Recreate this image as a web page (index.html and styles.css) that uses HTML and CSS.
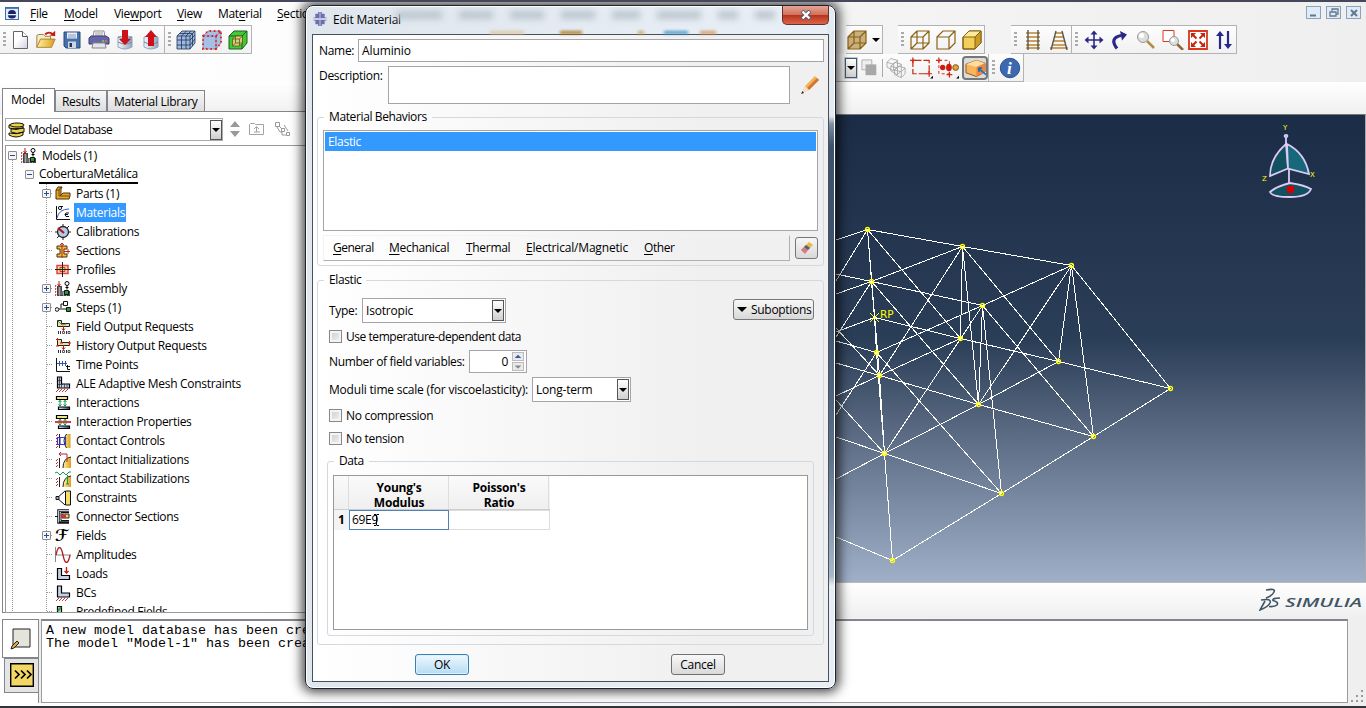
FILE: index.html
```html
<!DOCTYPE html>
<html lang="en">
<head>
<meta charset="utf-8">
<title>Edit Material</title>
<link rel="stylesheet" href="styles.css">
</head>
<body>
<svg class="defs" aria-hidden="true">
  <defs>
    <linearGradient id="gold" x1="0" x2="1"><stop offset="0" stop-color="#fff0a0"/><stop offset="1" stop-color="#d9a020"/></linearGradient>
    <linearGradient id="steel" x1="0" x2="1"><stop offset="0" stop-color="#f4f7fb"/><stop offset="1" stop-color="#92a4c0"/></linearGradient>
    <linearGradient id="paper" x1="0" x2="1" y2="1"><stop offset=".4" stop-color="#fff"/><stop offset="1" stop-color="#cfcfe0"/></linearGradient>
    <linearGradient id="metal" x1="0" x2="1"><stop offset="0" stop-color="#dfe6f5"/><stop offset="1" stop-color="#26388a"/></linearGradient>
    <symbol id="assembly" viewBox="0 0 16 16">
      <path d="M4 0v5M2.500 3L4 5l1.500-2" stroke="#c01818" fill="none"/>
      <path d="M1 4l-1 2M1 7l-1 2M1 10l-1 2M1 13l-1 2" stroke="#c01818"/>
      <path d="M2 5h5v5h8v5H2z" fill="#444"/><path d="M3 7h3M3 9h3M3 11h6M3 13h11M4.500 6v9M8.500 11v4M11.500 12v3" stroke="#ccc" stroke-width=".6"/>
      <circle cx="12" cy="2.500" r="2" fill="#fff" stroke="#000"/><path d="M12 4.500v4M10.500 6.500h3" stroke="#000"/><path d="M9.500 9.500h4v4h-4z" fill="#2c9a34" stroke="#111"/>
    </symbol>
    <symbol id="wirecube" viewBox="0 0 20 20"><path d="M1 7h12v12H1zM7 1h12v12H7zM1 7l6-6M13 7l6-6M13 19l6-6M1 19l6-6" fill="none" stroke="#8a6110" stroke-width="1.200"/></symbol>
    <symbol id="load" viewBox="0 0 16 16"><path d="M2.500 2.500h4v7h8v4h-12z" fill="#c4cfe8" stroke="#000" stroke-width="1.200"/></symbol>
    <symbol id="bc" viewBox="0 0 16 16"><path d="M2.500 1h4v7h8v4h-12z" fill="#c4cfe8" stroke="#000" stroke-width="1.200"/><path d="M1 16l3-3M4 16l3-3M7 16l3-3M10 16l3-3" stroke="#c02020" stroke-width=".9"/></symbol>
    <symbol id="inter" viewBox="0 0 16 16"><path d="M1.500 1.500h11v3h-11z" fill="#f2e48c" stroke="#000" stroke-width="1.200"/><path d="M5 5v6M10 5v6M3.500 7L5 5.500 6.500 7M3.500 9.500L5 11l1.500-1.500M8.500 7L10 5.500 11.500 7M8.500 9.500L10 11l1.500-1.500" stroke="#0a9a48" fill="none"/><path d="M3.500 12h11v2.500h-11z" fill="url(#metal)" stroke="#000" stroke-width="1.200"/></symbol>
    <symbol id="output" viewBox="0 0 16 16"><path d="M2.500 1.500h4v3h8v3h-12z" fill="#e9dca4" stroke="#222"/><path d="M8.500 7v4.500M7 9.500l1.500 2 1.500-2" stroke="#c01818" fill="none"/><path d="M3.500 12v3M5.500 12v3M11.500 12v3" stroke="#333"/><path d="M7.500 12.500h2v2h-2zM13 12.500h2v2h-2z" fill="none" stroke="#333" stroke-width=".8"/></symbol>
    <symbol id="contact" viewBox="0 0 16 16"><path d="M1 3l2-2M1 6l2-2M1 9l2-2M1 12l2-2M1 15l2-2" stroke="#c02020"/><path d="M4.500 1v14" stroke="#222"/><path d="M15.500 1h-4q-5 6.500 0 14h4z" fill="url(#gold)"/><path d="M11.500 1q-5 6.500 0 14" fill="none" stroke="#222"/></symbol>
  </defs>
</svg>
<div class="app">
  <div class="menubar">
    <svg class="ico14" viewBox="0 0 14 14"><rect x=".5" y=".5" width="13" height="12" fill="#dfeefa" stroke="#3c6fa8"/><path d="M1 1h12v1H1z" fill="#4c82bd"/><path d="M3 7a4 4 0 0 1 8 0zM3 8.300a4 3.200 0 0 0 8 0z" fill="#20206a"/></svg>
    <span class="m1"><u>F</u>ile</span><span class="m2"><u>M</u>odel</span><span class="m3">Vie<u>w</u>port</span><span class="m4"><u>V</u>iew</span><span class="m5">Mat<u>e</u>rial</span><span><u>S</u>ection</span>
    <div class="winbtns">
      <b><svg viewBox="0 0 13 11"><path d="M3 8.500h6" stroke="#667788" stroke-width="2"/></svg></b>
      <b><svg viewBox="0 0 13 11"><path d="M5 4V2h6v5H9M3 5h6v4H3z" fill="none" stroke="#667788" stroke-width="1.300"/></svg></b>
      <b><svg viewBox="0 0 13 11"><path d="M4 3l6 6M10 3L4 9" stroke="#667788" stroke-width="2"/></svg></b>
    </div>
  </div>
  <div class="toolrow">
    <div class="tools first">
      <i class="grip"></i>
      <svg viewBox="0 0 20 20"><path d="M2.500 1.500h9l5 5v12h-14z" fill="url(#paper)" stroke="#666"/><path d="M11.500 1.500v5h5" fill="#fff" stroke="#555"/></svg>
      <svg class="wide" viewBox="0 0 24 20"><path d="M2 18V5l2-1h5l2 2h6v4" fill="#f4ead0" stroke="#9b7a2c"/><path d="M2 18l4-9h16l-4 9z" fill="url(#gold)" stroke="#a97f22"/><path d="M11 4q4-4 9 0" fill="none" stroke="#c81e10" stroke-width="2"/><path d="M22 0v6l-6-1z" fill="#c81e10"/></svg>
      <svg viewBox="0 0 20 20"><path d="M2 2h16v16H4l-2-2z" fill="#4470ab" stroke="#2c4a77"/><path d="M5 2.500h10v6H5z" fill="#e8eef6"/><path d="M6 5h8M6 7h8" stroke="#8c9cb4"/><path d="M6 11.500h8V18H6z" fill="#cdd5df"/><path d="M7.500 13h2.500v4H7.500z" fill="#1c3560"/></svg>
      <svg class="wide" viewBox="0 0 22 20"><path d="M6 1h10l1 6H5z" fill="#fff" stroke="#888"/><path d="M7 3h8M7 5h8" stroke="#999"/><path d="M1 8l2-2h15l3 2v6H1z" fill="#6466a8" stroke="#3b3d78"/><path d="M5 13h12l1 5H4z" fill="#e4e4ea" stroke="#888"/><path d="M14 10h2v2h-2z" fill="#4dd06a"/><path d="M17 10h2v2h-2z" fill="#e07040"/></svg>
      <svg viewBox="0 0 20 20"><path d="M3 7v10q7 4 14 0V7q-7-3-14 0z" fill="url(#steel)" stroke="#8fa3bc"/><path d="M3 12q7 4 14 0M3 7q7 4 14 0" fill="none" stroke="#6e85a2"/><path d="M7 0h6v9h3l-6 6-6-6h3z" fill="#cc1018"/></svg>
      <svg viewBox="0 0 20 20"><path d="M3 7v10q7 4 14 0V7q-7-3-14 0z" fill="url(#steel)" stroke="#8fa3bc"/><path d="M3 12q7 4 14 0" fill="none" stroke="#6e85a2"/><path d="M7 16V7H4l6-7 6 7h-3v9z" fill="#cc1018"/></svg>
    </div>
    <div class="tools second">
      <i class="grip"></i>
      <svg viewBox="0 0 20 20"><path d="M1 6l5-5h13v12l-5 6H1z" fill="#9db9e2"/><path d="M1 6h13v13H1zM1 6l5-5h13v12l-5 6M14 6l5-5M5.500 6v13M10 6v13M1 10h13l5-5M1 15h13l5-6M3.500 3.500h13V16M10 6l5-5M5.500 6l5-5" fill="none" stroke="#223452" stroke-width=".8"/></svg>
      <svg viewBox="0 0 20 20"><path d="M1 6l5-5h13v12l-5 6H1z" fill="#a6bfe6"/><path d="M1 6h13v13H1zM1 6l5-5h13v12l-5 6M14 6l5-5" fill="none" stroke="#7788a8" stroke-width=".8"/><path d="M1 6h13v13H1zM1 6l5-5h13v12l-5 6M14 6l5-5" fill="none" stroke="#f01818" stroke-width="1.800" stroke-dasharray="1.500 2.800"/></svg>
      <svg viewBox="0 0 20 20"><path d="M1 6l5-5h13v12l-5 6H1z" fill="#3fcb33" stroke="#225c1e"/><path d="M1 6h13v13M14 6l5-5" fill="none" stroke="#225c1e"/><path d="M4.500 9l3-3h7v7l-3 3h-7z" fill="#d9cd72" stroke="#5a5526" stroke-width=".8"/><path d="M4.500 9h7v7M11.500 9l3-3M7.500 6v7h7M7.500 13l-3 3" stroke="#5a5526" fill="none" stroke-width=".8"/></svg>
    </div>
    <div class="spacer"></div>
    <div class="tools display">
      <svg viewBox="0 0 20 20"><path d="M1 7l6-6h12v12l-6 6H1z" fill="#c8b080"/><use href="#wirecube"/></svg><i class="down"></i>
    </div>
    <div class="tools cubes">
      <i class="grip"></i>
      <svg viewBox="0 0 20 20"><use href="#wirecube"/></svg>
      <svg viewBox="0 0 20 20"><path d="M1 7h12v12H1zM1 7l6-6h12v12l-6 6M13 7l6-6" fill="none" stroke="#8a6110" stroke-width="1.200"/></svg>
      <svg viewBox="0 0 20 20"><path d="M1 7l6-6h12v12l-6 6H1z" fill="#f3cf59" stroke="#7b5810"/><path d="M13 7l6-6v12l-6 6z" fill="#c99b28"/><path d="M1 7l6-6h12l-6 6z" fill="#fbe99c"/><path d="M1 7h12v12M13 7l6-6M1 7l6-6h12v12l-6 6H1z" fill="none" stroke="#8a6110"/></svg>
    </div>
    <div class="tools nav1">
      <i class="grip"></i>
      <svg viewBox="0 0 20 20"><path d="M3 3h14M3 7h14M3 11h14M3 15h14M3 18h14" stroke="#b98531" stroke-width="1.600"/><path d="M5 0v20M15 0v20" stroke="#555" stroke-width="1.400"/></svg>
      <svg viewBox="0 0 20 20"><path d="M6 3h8M5 7h10M4 11h12M3 15h14M1 18h18" stroke="#b98531" stroke-width="1.600"/><path d="M7 1L2 20M13 1l5 19" stroke="#555" stroke-width="1.400"/></svg>
    </div>
    <div class="tools nav2">
      <i class="grip"></i>
      <svg viewBox="0 0 20 20"><path d="M10 2v16M2 10h16" stroke="#2a2887" stroke-width="1.600"/><path d="M10 .5l3.500 4h-7zM10 19.500l3.500-4h-7zM.5 10l4-3.500v7zM19.500 10l-4-3.500v7z" fill="#2a2887"/></svg>
      <svg viewBox="0 0 20 20"><path d="M7 18.500Q-1 8 11 5.500" stroke="#2a2887" stroke-width="3.200" fill="none"/><path d="M10 1l7 3.500-5 6z" fill="#2a2887"/></svg>
      <svg viewBox="0 0 20 20"><path d="M11 11l7 7" stroke="#b28b45" stroke-width="2.500"/><circle cx="7" cy="7" r="5.500" fill="#dcdedc" stroke="#999"/><circle cx="5.500" cy="5.500" r="2.500" fill="#fff"/></svg>
      <svg class="wide" viewBox="0 0 22 20"><path d="M1 .5h11v11H1z" fill="#fff" stroke="#d83a20"/><path d="M15 14l6 6" stroke="#8c6a34" stroke-width="2.500"/><circle cx="12" cy="11" r="4.500" fill="#dcdedc" stroke="#999"/><circle cx="11" cy="10" r="2" fill="#fff"/></svg>
      <svg class="fit" viewBox="0 0 20 20"><path d="M1 1h18v18H1z" fill="#fff" stroke="#d63820" stroke-width="1.800"/><path d="M3 3h5L3 8zM17 3h-5l5 5zM3 17h5l-5-5zM17 17h-5l5-5z" fill="#c62410"/><path d="M4 4l4.500 4.500M16 4l-4.500 4.500M4 16l4.500-4.500M16 16l-4.500-4.500" stroke="#c62410" stroke-width="2"/></svg>
      <svg viewBox="0 0 20 20"><path d="M6 4v15M14 1v15" stroke="#2a2887" stroke-width="2.200"/><path d="M6 1l4 5H2zM14 19l4-5h-8z" fill="#2a2887"/></svg>
    </div>
  </div>
  <div class="toolrow two">
    <div class="tools blue"><i class="combo"></i>
      <svg viewBox="0 0 20 20"><path d="M1 1h11v11H1z" fill="#eee" stroke="#aaa"/><path d="M5 6h12v12H5z" fill="#a8a8a8"/></svg><i class="sep"></i>
      <svg class="wide" viewBox="0 0 22 22"><path d="M1 5l4-4 7 2v7l-4 4-7-4zM5 9l4-4 7 2v7l-4 4-7-4zM9 13l4-4 7 2v6l-4 4-7-3zM1 5l7 2 4-4M8 7v7M5 9l7 2 4-4M12 11v7M9 13l7 2 4-4M16 15v6" fill="#f6f6f6" stroke="#9b9b9b" stroke-width=".8"/></svg>
      <svg class="box" viewBox="0 0 24 22"><path d="M3 3h17v14H3z" fill="none" stroke="#c03018" stroke-width="1.300" stroke-dasharray="9 2"/><path d="M0 3h6M3 0v6M17 17h6M20 14v6" stroke="#d02818" stroke-width="1.300"/><path d="M24 19v3h-3z" fill="#000"/></svg>
      <svg class="box" viewBox="0 0 24 22"><path d="M0 3h6M3 0v6M11 18h6M14 15v6" stroke="#d02818" stroke-width="1.300"/><path d="M3 3h11v14H3z" fill="none" stroke="#d02818" stroke-dasharray="3 3"/><circle cx="7" cy="10.500" r="2.800" fill="#cc1c0c"/><ellipse cx="13.500" cy="10.500" rx="3" ry="4" fill="#cc1c0c"/><circle cx="20.500" cy="10.500" r="3" fill="#dfa43a" stroke="#7c4f16"/><path d="M24 19v3h-3z" fill="#000"/></svg>
      <span class="pressed"><svg viewBox="0 0 22 20"><path d="M1 6l11-4 9 3v9l-9 5-11-4z" fill="#f9b45a" stroke="#8a5a1c"/><path d="M1 6l11 3 9-4-9-3z" fill="#ffdb9c"/><path d="M12 9l9-4v9l-9 5z" fill="#f5853a"/><path d="M14 10l8 7M14 10l1 4M14 10h4" stroke="#0870c8" stroke-width="1.600" fill="none"/></svg></span>
    </div>
    <div class="tools info"><i class="grip"></i><svg viewBox="0 0 22 22"><circle cx="11" cy="11" r="9.700" fill="#3d69b0" stroke="#274f91"/><text x="8" y="17" class="infotext">i</text></svg></div>
  </div>
  <div class="contextbar"></div>

  <div class="viewport">
    <svg width="530" height="466" viewBox="836 115 530 466">
      <g class="wire">
        <path d="M836 240L867.500 229.500L962.500 246.500L1071.500 265.500L1170.500 388.500L1093.500 436.500L1001.500 493.500L892.500 560.500L836 537"/>
        <path d="M867.500 229.500L871.500 281.500L874.500 317.500L876.500 352.500L884.500 453.500L892.500 560.500M871.500 281.500L879.500 375.500L884.500 453.500M867.500 229.500L879.500 375.500"/>
        <path d="M836 274L871.500 281.500L982.500 305.500M836 332L874.500 317.500L960.500 338.500L1058.500 361.500L1170.500 388.500M836 294L871.500 281.500L962.500 246.500M867.500 229.500L836 281M871.500 281.500L836 337"/>
        <path d="M867.500 229.500L960.500 338.500M871.500 281.500L978.500 404.500M962.500 246.500L960.500 338.500M962.500 246.500L978.500 404.500M962.500 246.500L1058.500 361.500M962.500 246.500L879.500 375.500"/>
        <path d="M982.500 305.500L1071.500 265.500L978.500 404.500M1071.500 265.500L1058.500 361.500M1071.500 265.500L1093.500 436.500M982.500 305.500L978.500 404.500M982.500 305.500L1001.500 493.500M982.500 305.500L1093.500 436.500M982.500 305.500L884.500 453.500M982.500 305.500L876.500 352.500"/>
        <path d="M836 341L876.500 352.500L1001.500 493.500M836 415L876.500 352.500M836 363L879.500 375.500L978.500 404.500L1093.500 436.500M836 396L879.500 375.500L960.500 338.500M836 328L879.500 375.500M1058.500 361.500L978.500 404.500L884.500 453.500M836 400L884.500 453.500L1001.500 493.500M836 437L884.500 453.500M836 479L884.500 453.500"/>
      </g>
      <g class="nodes">
        <circle cx="867.500" cy="229.500" r="2"/><circle cx="962.500" cy="246.500" r="2"/><circle cx="1071.500" cy="265.500" r="2"/><circle cx="871.500" cy="281.500" r="2"/><circle cx="982.500" cy="305.500" r="2"/><circle cx="960.500" cy="338.500" r="2"/><circle cx="876.500" cy="352.500" r="2"/><circle cx="879.500" cy="375.500" r="2"/><circle cx="1058.500" cy="361.500" r="2"/><circle cx="1170.500" cy="388.500" r="2"/><circle cx="978.500" cy="404.500" r="2"/><circle cx="1093.500" cy="436.500" r="2"/><circle cx="884.500" cy="453.500" r="2"/><circle cx="1001.500" cy="493.500" r="2"/><circle cx="892.500" cy="560.500" r="2"/>
        <path class="ref" d="M870 313l9 9M879 313l-9 9"/>
      </g>
      <text class="rp" x="880" y="318">RP</text>
      <g fill="#12515f" stroke="#dccbf5" stroke-width="1.800">
        <path d="M1286 144Q1270 158 1270 176L1288 168.500z"/><path fill="#17687b" d="M1287 144Q1305 153 1309 174L1288 168.500z"/>
        <path d="M1286 136v10M1289 168v15"/><ellipse cx="1286" cy="136" rx="1.500" ry="1.200"/>
        <path d="M1270 192Q1277 186 1290 183Q1304 185 1311 189Q1308 197 1290 197Q1272 197 1270 192z"/>
      </g>
      <path d="M1287 186h7v7h-7z" fill="#d40000"/>
      <text class="axis" x="1283" y="130">Y</text><text class="axis" x="1310" y="177">X</text><text class="axis" x="1262" y="181">Z</text>
    </svg>
  </div>
  <div class="brand">
    <svg width="104" height="26" viewBox="0 0 104 26"><g fill="none" stroke="#405563" stroke-width="1.600"><path d="M7 2Q17 0 15 4Q13 8 7 10M2 12Q13 10 11 15Q9 19 1 22L6 13M21 10Q13 10 14 12.500Q20 14 18 17Q16 19 10 18.500"/></g><text class="simulia" x="26" y="19" textLength="77" lengthAdjust="spacingAndGlyphs">SIMULIA</text></svg>
  </div>

  <div class="leftpanel">
    <div class="tabs"><span class="on">Model</span><span class="res">Results</span><span class="lib">Material Library</span></div>
    <div class="panelbody">
      <div class="dbrow">
        <div class="db"><svg viewBox="0 0 18 16"><g fill="#ead24a" stroke="#111"><path d="M1 11v2q7 4 14 0v-3q-7 3-14 1zM3 7v3q6 3 13 0V6zM1 3v3q7 3 14 0V2z"/><ellipse cx="9" cy="3" rx="7" ry="2"/></g></svg><span>Model Database</span><i class="combo"></i></div>
        <svg class="updown" viewBox="0 0 10 18"><path d="M5 1l5 6H0zM5 17l5-6H0z" fill="#999"/></svg>
        <svg class="folder" viewBox="0 0 16 14"><path d="M.5 12.500v-10l1-1h4l1 1h8v10zM5 10h6M7.500 10V5M5 7l2.500-2.500L10 7" fill="none" stroke="#a3a3a3"/></svg>
        <svg class="netic" viewBox="0 0 16 15"><path d="M.5.500h4v4h-4zM6.500 6.500h3v3h-3zM11.500 10.500h3v3h-3zM4 4l3 3M2 5l3 5h2v3h4M9 3l4 6" fill="none" stroke="#999"/></svg>
      </div>
      <div class="tree">
        <div class="row l0"><i class="ex minus"></i><svg viewBox="0 0 16 16"><use href="#assembly"/></svg><span>Models (1)</span></div>
        <div class="row l1"><i class="ex minus"></i><span class="under">CoberturaMetálica</span></div>
        <div class="row"><i class="ex"></i><svg viewBox="0 0 16 16"><path d="M1 4l2-3h4l-1 2v6l2-2h7v3l-1 3H1z" fill="#e8a526" stroke="#4d3207"/><path d="M1 4h3v6h10M4 4l2-3M5 10l3-3" fill="none" stroke="#4d3207" stroke-width=".8"/></svg><span>Parts (1)</span></div>
        <div class="row"><svg viewBox="0 0 16 16"><path d="M1.500 1v13.500H15" fill="none" stroke="#111"/><path d="M2 13Q4 4 14 4" fill="none" stroke="#3660c0"/><circle cx="5" cy="3" r="1.600" fill="none" stroke="#111"/><path d="M5 1.500h3M14 8h-3l-1 1.500 1 2h3M10 9.500h3" fill="none" stroke="#111"/></svg><span class="sel">Materials</span></div>
        <div class="row"><svg viewBox="0 0 16 16"><circle cx="8" cy="8" r="5.500" fill="#b6c9e8" stroke="#222" stroke-width="1.300"/><path d="M8 0v3M8 13v3M0 8h3M13 8h3M14 2l-2 2M2 14l2-2" stroke="#222"/><path d="M3 4l6 5" stroke="#b21818" stroke-width="2.200"/></svg><span>Calibrations</span></div>
        <div class="row"><svg viewBox="0 0 16 16"><path d="M2 3h10v3H9v5h3v3H2v-3h3V6H2z" fill="#f1bd43" stroke="#47330a"/><path d="M7 0v15M5 2l2-2 2 2M9 8.500h6M13 6v5" stroke="#c22020" fill="none"/></svg><span>Sections</span></div>
        <div class="row"><svg viewBox="0 0 16 16"><path d="M2 3.500h11v8H2z" fill="#fbd9a0" stroke="#dc4848" stroke-width="1.500"/><path d="M5 5.500h5v4H5z" fill="#ffce54" stroke="#d33"/><path d="M7.500 0v15M0 7.500h16" stroke="#222"/></svg><span>Profiles</span></div>
        <div class="row"><i class="ex"></i><svg viewBox="0 0 16 16"><use href="#assembly"/></svg><span>Assembly</span></div>
        <div class="row"><i class="ex"></i><svg viewBox="0 0 16 16"><path d="M4 9h8M6 8V4h2" stroke="#111" fill="none"/><circle cx="2" cy="9.500" r="1.800" fill="#fff" stroke="#111"/><path d="M8.500 1.500h4v4h-4z" fill="#fff" stroke="#111"/><path d="M11.500 7.500h4v4h-4z" fill="#259b2b" stroke="#111"/></svg><span>Steps (1)</span></div>
        <div class="row"><svg viewBox="0 0 16 16"><use href="#output"/><path d="M3 2l4 4 4-1" stroke="#37a33c" fill="none"/></svg><span>Field Output Requests</span></div>
        <div class="row"><svg viewBox="0 0 16 16"><use href="#output"/><path d="M1 1.500h3M2.500 0v3M5 5h3M13 5h3M14.500 3v4M1 8h3" stroke="#d01818"/></svg><span>History Output Requests</span></div>
        <div class="row"><svg viewBox="0 0 16 16"><path d="M1.500 1v13.500H15" fill="none" stroke="#111"/><path d="M2 6.500h10M4.500 4v5M7.500 4v5M10.500 4v5" stroke="#3458b0"/><path d="M12.500 8v4.500H15M11 9.500h4" fill="none" stroke="#111"/></svg><span>Time Points</span></div>
        <div class="row"><svg viewBox="0 0 16 16"><use href="#bc"/><path d="M4.500 1v11M3 4.500h3M3 8.500h5M6.500 8v4M9.500 8v4M12 8v4" stroke="#333" stroke-width=".8"/></svg><span>ALE Adaptive Mesh Constraints</span></div>
        <div class="row"><svg viewBox="0 0 16 16"><use href="#inter"/></svg><span>Interactions</span></div>
        <div class="row"><svg viewBox="0 0 16 16"><use href="#inter"/><path d="M0 8h16" stroke="#d83c3c" stroke-width="2"/></svg><span>Interaction Properties</span></div>
        <div class="row"><svg viewBox="0 0 16 16"><use href="#contact"/><path d="M2.500 4.500h8v7h-8zM5 4v8" fill="none" stroke="#3838c8" stroke-width="1.200"/></svg><span>Contact Controls</span></div>
        <div class="row"><svg viewBox="0 0 16 16"><path d="M1 9l2-2M1 12l2-2M1 15l2-2" stroke="#c02020"/><path d="M4.500 6v10" stroke="#222"/><path d="M16 5q-8 2-8 11h8z" fill="url(#gold)"/><path d="M16 5q-8 1-8 11" fill="none" stroke="#222"/><path d="M4 2h8v8M6 0L4 2l2 2" fill="none" stroke="#c02020"/></svg><span>Contact Initializations</span></div>
        <div class="row"><svg viewBox="0 0 16 16"><path d="M1 9l2-2M1 12l2-2M1 15l2-2" stroke="#c02020"/><path d="M4.500 6v10" stroke="#222"/><path d="M16 5q-8 2-8 11h8z" fill="url(#gold)"/><path d="M16 5q-8 1-8 11" fill="none" stroke="#222"/><path d="M0 2l2-1 3 3 3-3 3 3 3-3h2M12.500 4v9M11 13h3" fill="none" stroke="#149a4c"/></svg><span>Contact Stabilizations</span></div>
        <div class="row"><svg viewBox="0 0 16 16"><path d="M2 8l8-7M2 8l8 7" stroke="#111"/><path d="M10.500 1h5v14h-5z" fill="#f4df6e" stroke="#111"/><path d="M1 6.500h3v3H1z" fill="#9fb1cf" stroke="#111"/></svg><span>Constraints</span></div>
        <div class="row"><svg viewBox="0 0 16 16"><path d="M14 1.500H3.500v12H14" fill="none" stroke="#111" stroke-width="2.500"/><path d="M14 1.500H3.500v12" fill="none" stroke="#bcc8dd"/><path d="M0 7.500h3M14 3.500H6v8h8" stroke="#111" fill="none"/><path d="M7 5h7v4H7z" fill="#f1cf66" stroke="#222"/><path d="M6 6h5v3H6z" fill="#d03028"/></svg><span>Connector Sections</span></div>
        <div class="row"><i class="ex"></i><b class="script">ℱ</b><span>Fields</span></div>
        <div class="row"><svg viewBox="0 0 16 16"><path d="M.5 0v15M0 8h16" stroke="#888"/><path d="M1 8C3-2 6-2 8 8s5 10 7 0" fill="none" stroke="#b21c24" stroke-width="1.300"/></svg><span>Amplitudes</span></div>
        <div class="row"><svg viewBox="0 0 16 16"><use href="#load"/><path d="M11.500 1v6M9.500 5l2 2 2-2" stroke="#c51818" fill="none" stroke-width="1.300"/></svg><span>Loads</span></div>
        <div class="row"><svg viewBox="0 0 16 16"><use href="#bc"/></svg><span>BCs</span></div>
        <div class="row"><svg viewBox="0 0 16 16"><use href="#load"/><path d="M3 7l3-4" stroke="#24a032" stroke-width="2"/></svg><span>Predefined Fields</span></div>
      </div>
    </div>
  </div>

  <div class="messages">
    <div class="mtabs">
      <div class="mtab a"><svg viewBox="0 0 24 24"><path d="M4 3h17v18H4z" fill="#e4e4da" stroke="#222"/><path d="M3 20l5-5 2 2-5 5-3 1z" fill="#e0a83a" stroke="#222"/></svg></div>
      <div class="mtab b"><svg viewBox="0 0 24 24"><path d="M.7.700h22.600v22.600H.7z" fill="#f2d764" stroke="#000" stroke-width="1.400"/><path d="M5 7.500l4 4-4 4M11 7.500l4 4-4 4M17 7.500l4 4-4 4" fill="none" stroke="#000" stroke-width="1.700"/></svg></div>
    </div>
    <div class="log">A new model database has been created.<br>The model "Model-1" has been created.</div>
    <svg class="sizer" viewBox="0 0 14 14"><path d="M0 11h2v2H0zM5 11h2v2H5zM10 11h2v2h-2zM5 6h2v2H5zM10 6h2v2h-2zM10 1h2v2h-2z" fill="#999"/></svg>
  </div>

  <div class="dialog">
    <div class="title">
      <svg class="ico14" viewBox="0 0 14 15"><path d="M5 0h4v2h3v4h2v1H0V6h2V2h3zM0 8h14v1h-2v4H9v2H5v-2H2V9H0z" fill="#6f6fae"/><path d="M7 0v15" stroke="#9d9dcb" stroke-width="2"/><path d="M0 7h14v1H0z" fill="#eef"/></svg>
      <span>Edit Material</span>
      <div class="ghosts" aria-hidden="true"><i></i><i></i><i></i><i></i><i></i><i></i><i></i><i></i></div>
      <div class="glow" aria-hidden="true"><i></i><i></i><i></i><i></i><i></i></div>
      <div class="close"><svg viewBox="0 0 12 10"><path d="M2 1l8 8M10 1L2 9" stroke="#525968" stroke-width="4"/><path d="M2.500 1.500l7 7M9.500 1.500l-7 7" stroke="#fff" stroke-width="2.400"/></svg></div>
    </div>
    <div class="dbody">
      <div class="namerow"><label>Name:</label><div class="field">Aluminio</div></div>
      <div class="descrow"><label>Description:</label><div class="field"></div><svg viewBox="0 0 20 20"><path d="M2 18l3-7L15 1l4 4L9 15z" fill="#f0b458"/><path d="M17 3l2 2L9 15l-2-2z" fill="#d57235"/><path d="M5 11l4 4-7 3z" fill="#fadfc4"/><path d="M1 19l1.500-3 1.500 2z" fill="#222"/></svg></div>
      <fieldset class="beh"><legend>Material Behaviors</legend>
        <div class="list"><div>Elastic</div></div>
        <div class="mrow"><div class="mm"><span class="g1"><u>G</u>eneral</span><span class="g2"><u>M</u>echanical</span><span class="g3"><u>T</u>hermal</span><span class="g4"><u>E</u>lectrical/Magnetic</span><span class="g5"><u>O</u>ther</span></div>
        <div class="eraser"><svg viewBox="0 0 14 14"><path d="M1 9l8-8 4 3-8 8z" fill="#f0b648"/><path d="M1 9l3-3 4 3-3 4z" fill="#d87888"/><path d="M4 6l2-2 4 3-2 2z" fill="#4d5f82"/></svg></div></div>
      </fieldset>
      <fieldset class="ela"><legend>Elastic</legend>
        <div class="typerow"><label>Type:</label><div class="select">Isotropic<i class="combo"></i></div><div class="sub"><i class="down"></i>Suboptions</div></div>
        <div class="check c1"><i></i><span>Use temperature-dependent data</span></div>
        <div class="numrow"><label>Number of field variables:</label><div class="spin"><span>0</span><div class="arrows"><i><svg viewBox="0 0 12 9"><path d="M2 6l4-4 4 4z" fill="#3858b0"/></svg></i><i><svg viewBox="0 0 12 9"><path d="M2 3l4 4 4-4z" fill="#888"/></svg></i></div></div></div>
        <div class="modrow"><label>Moduli time scale (for viscoelasticity):</label><div class="select">Long-term<i class="combo"></i></div></div>
        <div class="check c2"><i></i><span>No compression</span></div>
        <div class="check c3"><i></i><span>No tension</span></div>
        <fieldset class="data"><legend>Data</legend>
          <div class="sheet">
            <div class="hd"><b></b><b class="h1">Young's<br>Modulus</b><b class="h2">Poisson's<br>Ratio</b></div>
            <div class="rw"><b>1</b><div class="cell">69E9</div><div class="cell2"></div></div>
            <svg class="caret" viewBox="0 0 7 12"><path d="M1 .5h2l.5.500.5-.5h2M1 11.500h2l.5-.5.5.500h2M3.500 1v10" fill="none" stroke="#000"/></svg>
          </div>
        </fieldset>
      </fieldset>
      <div class="buttons"><div class="btn ok">OK</div><div class="btn">Cancel</div></div>
    </div>
  </div>
</div>
</body>
</html>
```

FILE: styles.css
```css
* { box-sizing: border-box; }
body { margin: 0; font: 12px/16px "Open Sans", "Noto Sans", sans-serif; letter-spacing: -0.3px; color: #000; overflow: hidden; }
i { font-style: normal; display: block; flex: none; }
svg { display: block; flex: none; }
u { text-underline-offset: 2px; }
.defs { position: absolute; width: 0; height: 0; }
.app { position: relative; width: 1366px; height: 708px; overflow: hidden; background: linear-gradient(90deg, #fff 0, #fdfdfd 300px, #f4f4f4 840px, #efefef 1366px); border-top: 2px solid #45485a; display: grid; grid-template: 23px 29px 28px 32px 468px 36px 90px / 306px 530px 1fr; }
.menubar { grid-column: 1 / -1; display: flex; align-items: center; padding-left: 5px; white-space: nowrap; }
.ico14 { width: 14px; height: 14px; }
.menubar > svg { margin: 0 11px 0 0; }
.m1 { width: 34px; } .m2 { width: 50px; } .m3 { width: 63px; } .m4 { width: 41px; } .m5 { width: 59px; }
.winbtns { display: flex; gap: 5px; margin: -3px 5px 0 auto; }
.winbtns b { width: 15px; height: 13px; background: #deebf8; border: 1px solid #8fa2ba; }
.toolrow { grid-column: 1 / -1; display: flex; }
.tools { height: 29px; display: flex; align-items: center; background: linear-gradient(#fdfdfd, #f1f1f1); border: solid #b3b3b3; border-width: 1px 1px 1px 0; }
.tools svg { width: 20px; height: 20px; margin-right: 6px; }
.tools svg.wide { width: 22px; height: 20px; margin-right: 5px; }
.grip { width: 3px; height: 15px; margin: 0 7px 0 3px; background: repeating-linear-gradient(#aaa 0 2px, transparent 2px 4px); }
.first { width: 165px; }
.first svg:nth-of-type(1) { margin: 0 4px 0 -2px; }
.second { width: 87px; }
.second .grip { margin-right: 5px; }
.spacer { width: 594px; }
.display { width: 37px; }
.display svg { margin: 0 5px 0 1px; }
.down { border: 4px solid transparent; border-top: 4px solid #000; border-bottom: 0; }
.cubes { width: 87px; margin-left: 15px; }
.cubes .grip { margin-right: 6px; }
.nav1 { width: 61px; margin-left: 26px; }
.nav1 .grip, .nav2 .grip { margin-right: 6px; }
.nav2 { width: 165px; }
.nav2 svg { margin-right: 6px; }
.nav2 svg.wide { margin-right: 4px; }
.toolrow.two { padding-left: 828px; }
.two .tools { height: 28px; border-top: 0; }
.blue { width: 161px; }
.combo { width: 12px; height: 20px; border: 1px solid #555; background: linear-gradient(#fff, #cfcfcf); display: grid; place-items: center; }
.combo::after { content: ""; border: 4px solid transparent; border-top-color: #000; border-bottom: 0; }
.blue .combo { margin: 0 4px 0 17px; box-shadow: 0 0 0 1px #b6cbe4; }
.tools.blue svg { margin-right: 4px; width: 18px; }
.sep { width: 1px; height: 18px; background: #aaa; margin: 0 3px 0 -1px; }
.tools.blue svg.wide { width: 21px; height: 22px; margin-right: 3px; }
.tools.blue svg.box { width: 23px; height: 22px; margin-right: 3px; }
.pressed { width: 26px; height: 24px; border: 2px solid #777; border-radius: 4px; background: #dcdcdc; flex: none; padding-left: 1px; }
.tools.blue .pressed svg { width: 21px; height: 20px; }
.info { width: 35px; }
.info .grip { margin-right: 4px; }
.tools.info svg { width: 22px; height: 22px; margin: 0; }
.infotext { font: italic bold 17px "Liberation Serif", serif; fill: #fff; }
.contextbar { grid-column: 1 / -1; grid-row: 4; background: linear-gradient(#fff, #efefef); height: 33px; }
.viewport { grid-area: 5 / 3; border-top: 1px solid #777; border-right: 1px solid #aaa; background: linear-gradient(#1b2c46 0, #23344e 22%, #2b3e57 48%, #5a6a82 68%, #9fafc7 100%); height: 468px; overflow: hidden; }
.wire { fill: none; stroke: #fff; stroke-width: 1; shape-rendering: crispEdges; }
.nodes { fill: none; stroke: #ff0; stroke-width: 1.3; }
.ref { stroke-width: 1; }
.rp { font: 10.5px "DejaVu Sans", sans-serif; letter-spacing: 0; fill: #ff0; }
.axis { font: 7px "DejaVu Sans", sans-serif; fill: #ff0; }
.brand { grid-area: 6 / 2 / 7 / 4; background: linear-gradient(#fff, #efefef); border-top: 1px solid #bbb; display: flex; justify-content: flex-end; padding: 5px 3px 0 0; }
.simulia { font: italic 600 13px "Open Sans", sans-serif; letter-spacing: 0; fill: #405563; }

.leftpanel { grid-area: 4 / 1 / 7 / 2; position: relative; padding: 7px 0 0 2px; height: 531px; }
.tabs { display: flex; align-items: flex-end; height: 22px; white-space: nowrap; }
.tabs span { border: 1px solid #84848c; border-bottom: 0; background: linear-gradient(#f7f7f7, #dedede); height: 21px; padding: 3px 0 0 6px; }
.tabs .on { width: 53px; height: 24px; background: #fff; padding: 3px 0 0 8px; margin-bottom: -1px; position: relative; }
.tabs .res { width: 52px; } .tabs .lib { width: 98px; }
.panelbody { border: 1px solid #84848c; border-right: 0; height: 502px; padding: 6px 0 0 2px; background: #fff; }
.dbrow { display: flex; height: 22px; }
.db { width: 218px; height: 23px; border: 1px solid #aaa; display: flex; align-items: center; padding-left: 2px; letter-spacing: -.48px; }
.db svg { width: 18px; height: 16px; margin-right: 2px; }
.db span { padding-top: 1px; }
.db .combo { margin-left: auto; }
.updown { width: 10px; height: 18px; margin: 2px 0 0 7px; }
.folder { width: 16px; height: 14px; margin: 4px 0 0 9px; }
.netic { width: 16px; height: 15px; margin: 4px 0 0 10px; }
.tree { margin-top: 5px; height: 468px; border: 1px solid #999; border-right: 0; overflow: hidden; background: repeating-linear-gradient(#999 0 1px, transparent 1px 2px) 6px 14px / 1px 460px no-repeat, repeating-linear-gradient(#999 0 1px, transparent 1px 2px) 40px 36px / 1px 460px no-repeat; }
.row { height: 19px; display: flex; align-items: center; white-space: nowrap; padding-left: 49px; position: relative; }
.row:not(.l0):not(.l1)::before { content: ""; width: 6px; height: 1px; background: repeating-linear-gradient(90deg, #999 0 1px, transparent 1px 2px); margin-left: -8px; margin-right: 2px; }
.row svg { width: 16px; height: 16px; margin-right: 5px; }
.row.l0 { padding-left: 15px; } .row.l1 { padding-left: 33px; }
.ex { position: absolute; left: 36px; top: 5px; width: 9px; height: 9px; border: 1px solid #8d8d8d; border-radius: 1px; background: linear-gradient(#2a4a94, #2a4a94) 1px 3px / 5px 1px no-repeat, linear-gradient(#2a4a94, #2a4a94) 3px 1px / 1px 5px no-repeat, #f5f5f5; }
.minus { left: 2px; background: linear-gradient(#2a4a94, #2a4a94) 1px 3px / 5px 1px no-repeat, #f5f5f5; }
.l1 .ex { left: 19px; }
.under { border-bottom: 2px solid #000; line-height: 16px; padding-top: 1px; }
.sel { background: #3399ff; color: #fff; height: 19px; line-height: 19px; margin-left: -2px; padding: 0 1px 0 2px; }
.script { width: 16px; margin-right: 5px; font: bold 16px "DejaVu Serif", "DejaVu Sans", serif; }
.messages { grid-area: 7 / 1 / 8 / 4; display: flex; margin-top: 1px; border-bottom: 2px solid #33343a; position: relative; height: 89px; }
.mtabs { width: 39px; padding-left: 2px; }
.mtab { border: 1px solid #84848c; border-right: 0; }
.a { height: 39px; background: #fff; padding: 6px 0 0 6px; }
.b { margin-left: 2px; height: 35px; background: #e4e4e4; padding: 4px 5px; }
.mtab svg { width: 24px; height: 24px; }
.log { margin-left: 2px; width: 1307px; height: 84px; border: 1px solid #9a9aa2; border-top: 2px solid #84848c; box-shadow: -2px 0 0 #eee, -3px 0 0 #888; background: #fff; font: 13.33px/13px "Liberation Mono", monospace; letter-spacing: 0; padding: 3px 4px; white-space: nowrap; }
.sizer { width: 14px; height: 14px; margin: 70px 0 0 3px; }

.dialog { position: absolute; left: 305px; top: 3px; width: 531px; height: 684px; border: 1px solid #20242c; border-radius: 8px; padding: 0 6px 6px; box-shadow: inset 0 0 0 1px #fff, 0 0 12px 3px rgba(0,0,0,.75); background: linear-gradient(#e3eaf2 0 110px, #7d8fa5 118px, #3d526f 140px, #3d526f 300px, #5c708c 450px, #a7b7ca 570px, #e6edf5 580px) 100% 0 / 8px 100% no-repeat, linear-gradient(90deg, #dfe6ed, #e9eff6); }
.title { height: 28px; position: relative; display: flex; padding: 6px 0 0 1px; }
.title > span { margin-left: 6px; letter-spacing: -.2px; }
.ghosts, .glow { position: absolute; left: 84px; top: 5px; display: flex; filter: blur(3px); }
.ghosts i { width: 34px; height: 8px; background: #bcc5cf; margin-right: 17px; }
.ghosts i:first-child { width: 46px; }
.ghosts i:nth-child(5) { width: 28px; } .ghosts i:nth-child(6) { width: 44px; } .ghosts i:nth-child(n+7) { width: 20px; }
.glow { left: 178px; top: 25px; filter: blur(1.5px); height: 3px; overflow: hidden; }
.glow i { width: 34px; height: 8px; background: #dcc9a4; margin-right: 36px; }
.glow i:nth-child(2) { width: 22px; background: #b07a28; margin-right: 56px; }
.glow i:nth-child(3) { width: 6px; background: #c8a860; margin-right: 20px; }
.glow i:nth-child(4) { width: 24px; background: #4a98cd; margin-right: 12px; }
.glow i:nth-child(5) { width: 16px; background: #d89a60; margin: 0; }
.close { position: absolute; left: 470px; top: 0; width: 47px; height: 19px; border: 1px solid #64322c; border-top: 0; border-radius: 0 0 5px 5px; background: linear-gradient(#e5a497 0, #d2715e 48%, #b9331d 52%, #d9664a 100%); display: grid; place-items: center; }
.close svg { width: 12px; height: 10px; }
.dbody { height: 648px; border: 1px solid #4a5058; background: linear-gradient(90deg, #fff, #f0f0f0 75%); padding: 4px 4px 0 4px; }
.field { background: #fff; border: 1px solid #a5a5a9; }
.namerow { display: flex; height: 23px; align-items: center; }
.namerow label { width: 41px; padding-left: 2px; }
.namerow .field { flex: 1; height: 23px; padding: 3px; letter-spacing: -.1px; }
.descrow { display: flex; margin-top: 4px; height: 38px; }
.descrow label { width: 71px; padding: 2px 0 0 2px; }
.descrow .field { width: 402px; }
.descrow svg { width: 20px; height: 20px; margin: 9px 0 0 10px; }
fieldset { min-width: 0; margin: 0; padding: 0; border: 1px solid #cfdae3; border-radius: 3px; }
legend { height: 16px; padding: 0 5px; margin-left: 6px; letter-spacing: -.38px; }
.beh { margin-top: 5px; height: 157px; }
.list { margin: 5px 5px 0; height: 101px; border: 1px solid #a5a5a9; background: #fff; padding: 1px; }
.list div { height: 19px; line-height: 19px; padding-left: 3px; background: #3399ff; color: #fff; }
.mrow { display: flex; margin: 4px 5px 0; }
.mm { width: 467px; height: 26px; border: 1px solid #b0b0b0; border-top-color: #f3f3f3; border-left-color: #f3f3f3; display: flex; align-items: center; padding-left: 9px; white-space: nowrap; }
.g1 { width: 56px; letter-spacing: -.5px; } .g2 { width: 77px; } .g3 { width: 60px; } .g4 { width: 118px; letter-spacing: -.18px; } .g5 { letter-spacing: -.4px; }
.eraser { width: 23px; height: 22px; margin: 2px 0 0 5px; border: 1px solid #777; border-radius: 3px; background: linear-gradient(#f6f6f6, #d8d8d8); display: grid; place-items: center; }
.eraser svg { width: 14px; height: 14px; }
.ela { margin-top: 6px; height: 373px; padding: 0 9px 0 11px; }
.ela > legend { margin-left: -5px; }
.typerow { display: flex; margin-top: 10px; height: 25px; align-items: center; }
.typerow label { width: 33px; }
.select { width: 144px; height: 25px; border: 1px solid #a5a5a9; background: #fff; display: flex; align-items: center; padding: 0 1px 0 3px; letter-spacing: -.2px; }
.select .combo { margin-left: auto; height: 21px; }
.sub { margin-left: auto; width: 81px; height: 21px; border: 1px solid #777; border-radius: 3px; background: linear-gradient(#f8f8f8, #d8d8d8); display: flex; align-items: center; padding-left: 3px; margin-top: -2px; white-space: nowrap; }
.sub .down { margin-right: 4px; border-width: 5px 5px 0; }
.check { display: flex; height: 16px; align-items: center; }
.check i { width: 13px; height: 13px; border: 1px solid #888; box-shadow: inset 0 0 0 2px #f4f4f4; background: linear-gradient(135deg, #c8ccd2, #f4f4f4); margin-right: 4px; margin-top: -1px; }
.c1 { margin-top: 6px; letter-spacing: -.45px; }
.numrow { display: flex; align-items: center; margin-top: 5px; height: 23px; }
.numrow label { width: 140px; white-space: nowrap; letter-spacing: -.34px; }
.spin { width: 58px; height: 23px; border: 1px solid #a5a5a9; background: #fff; display: flex; align-items: center; justify-content: flex-end; padding-right: 2px; }
.arrows { margin-left: 4px; display: grid; gap: 1px; }
.arrows i { width: 12px; height: 9px; background: #eaeaea; border: 1px solid #bbb; }
.modrow { display: flex; align-items: center; margin-top: 4px; height: 25px; }
.modrow label { width: 203px; white-space: nowrap; letter-spacing: -.2px; }
.modrow .select { width: 99px; }
.c2 { margin-top: 6px; } .c3 { margin-top: 7px; }
.data { margin: 6px 0 0 -2px; width: 487px; height: 183px; }
.sheet { margin: 6px 5px 0; height: 155px; border: 1px solid #999; background: #fff; position: relative; line-height: 15px; letter-spacing: -.1px; }
.hd { display: flex; height: 34px; width: 216px; background: linear-gradient(#fafafa, #efefef); border-bottom: 1px solid #ccc; text-align: center; }
.hd b { width: 15px; border-right: 1px solid #ddd; padding-top: 4px; } .hd .h1, .hd .h2 { width: 100px; padding-left: 1px; letter-spacing: -.2px; }
.rw { display: flex; height: 20px; line-height: 20px; }
.rw b { width: 15px; background: #f3f3f3; text-align: center; }
.cell { width: 100px; border: 1px solid #4d83bd; padding-left: 2px; letter-spacing: -.3px; line-height: 18px; }
.cell2 { width: 101px; border: 1px solid #ddd; border-left: 0; }
.caret { position: absolute; left: 39px; top: 38px; width: 7px; height: 12px; }
.buttons { display: flex; margin: 9px 0 0 98px; gap: 202px; }
.btn { width: 54px; height: 21px; border: 1px solid #707070; border-radius: 3px; background: linear-gradient(#f8f8f8, #d9d9d9); text-align: center; line-height: 19px; }
.ok { border-color: #3c7fb1; background: linear-gradient(#eef8fe, #b5dcf3); box-shadow: inset 0 0 0 1px #d8f2ff; }
```
